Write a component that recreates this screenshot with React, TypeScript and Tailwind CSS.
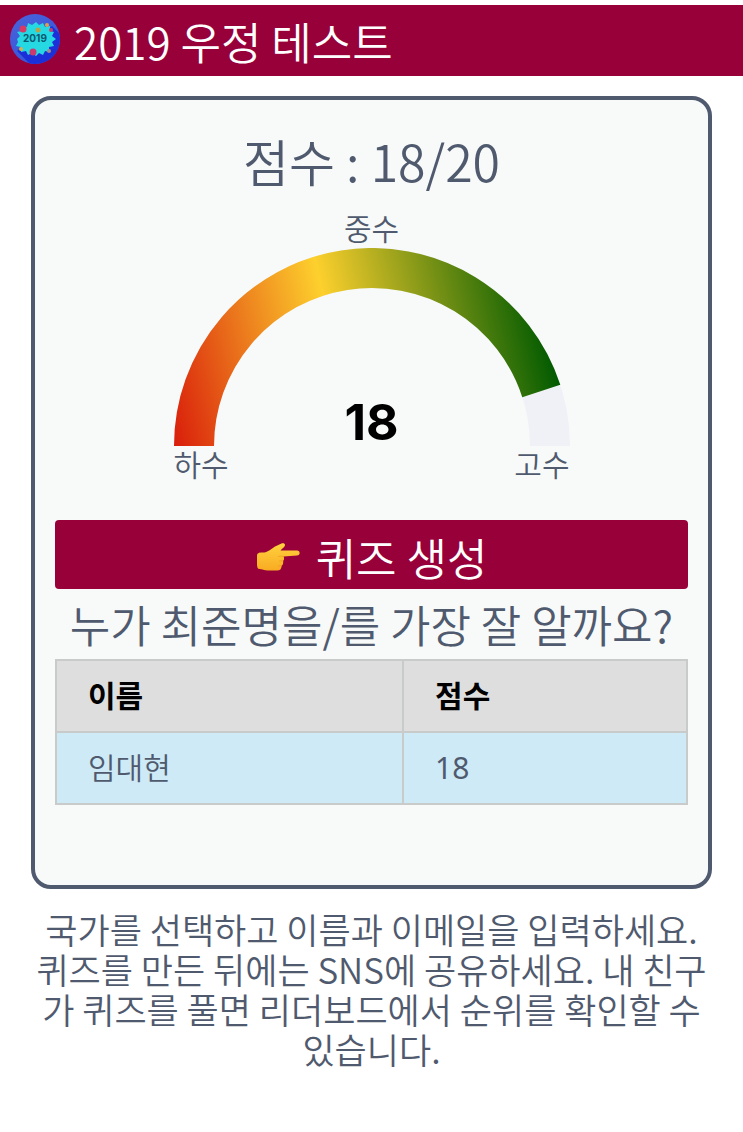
type Entry = {
  name: string;
  score: number;
};

const TOTAL = 20;
const entries: Entry[] = [{ name: "임대현", score: 18 }];

function Logo() {
  return (
    <svg viewBox="0 0 50 50" className="size-[50px] shrink-0" aria-hidden="true">
      <defs>
        <linearGradient id="logo-bg" x1="0" y1="0" x2="0.6" y2="1">
          <stop offset="0" stopColor="#4a63d8" />
          <stop offset="1" stopColor="#3554dc" />
        </linearGradient>
        <clipPath id="logo-clip">
          <circle cx="25" cy="25" r="25" />
        </clipPath>
      </defs>
      <circle cx="25" cy="25" r="25" fill="url(#logo-bg)" />
      <path d="M7 37L20 50H50V20L42 12Z" fill="#1c30da" clipPath="url(#logo-clip)" />
      <path
        d="M7 25l3-3-3-4 5-1-1-5 6 1 1-4 4 2 4-3 3 3 4-2 2 4 5-1v5l4 1-2 4 4 3-4 3 2 4-5 1v5l-4-1-2 4-4-2-3 3-4-3-4 2-2-4-5 1 0-5-5-1 2-4z"
        fill="#25d8e2"
      />
      <circle cx="13" cy="15" r="3.5" fill="#d93a63" />
      <circle cx="28" cy="16" r="2.5" fill="#b5a34a" />
      <circle cx="37" cy="11" r="2" fill="#dca24a" />
      <circle cx="41" cy="16" r="2" fill="#c4416e" />
      <circle cx="11" cy="35" r="2" fill="#d5b04c" />
      <circle cx="23" cy="38" r="3.5" fill="#c93a72" />
      <circle cx="39" cy="37" r="2" fill="#a68c8a" />
      <text x="25" y="28" textAnchor="middle" className="fill-[#0c5870] font-['Inter'] text-[10px] font-bold">
        2019
      </text>
    </svg>
  );
}

function PointingHand() {
  return (
    <svg viewBox="0 0 44 28" className="h-7 w-11 shrink-0" aria-hidden="true">
      <defs>
        <linearGradient id="hand" x1="0" y1="0" x2="0" y2="1">
          <stop offset="0" stopColor="#ffd23f" />
          <stop offset="1" stopColor="#f9ab22" />
        </linearGradient>
      </defs>
      <path
        d="M1 13C1 10 3 9.500 6 9.500C11 10 15 6 19 3.500L25 .7C27 -.2 29 .3 29 2C29 4 26 5.500 24.500 7.500L41 7.500C44.500 7.500 44.500 12.500 41 12.500L27.500 13.500C28.500 15 28.200 17 27 18C27.500 20 27 22 25.500 23C25.500 26 24 27.500 21 27.500L12 27.500C8 27.500 6 26 3.500 26C1.500 26 1 24 1 21Z"
        fill="url(#hand)"
      />
      <path
        d="M27.500 13.500C25 13 23.500 13 22.500 13.500M27 18C25.500 17.500 24 17.800 23.500 18M25.500 23C24.500 22.500 23.500 22.500 22.500 23"
        fill="none"
        stroke="#e89a1c"
        strokeWidth="0.700"
        strokeLinecap="round"
      />
    </svg>
  );
}

function Gauge({ score }: { score: number }) {
  const angle = Math.PI * (1 - score / TOTAL);
  const x = 198 + 178 * Math.cos(angle);
  const y = 198 - 178 * Math.sin(angle);

  return (
    <div className="mx-auto w-[396px] max-w-full text-[30px] leading-[34px]">
      <p className="pb-1 text-center">중수</p>
      <div className="relative">
        <svg viewBox="0 0 396 198" className="block w-full" aria-hidden="true">
          <defs>
            <linearGradient id="gauge" gradientUnits="userSpaceOnUse" x1="0" y1="198" x2="380" y2="109">
              <stop offset="0" stopColor="#d91e0b" />
              <stop offset="0.46" stopColor="#fdd02d" />
              <stop offset="1" stopColor="#005a00" />
            </linearGradient>
          </defs>
          <path d="M20 198A178 178 0 0 1 376 198" fill="none" stroke="#f0f1f6" strokeWidth="40" />
          <path
            d={`M20 198A178 178 0 0 1 ${x} ${y}`}
            fill="none"
            stroke="url(#gauge)"
            strokeWidth="40"
          />
        </svg>
        <p className="absolute inset-x-0 bottom-0 text-center font-['Inter',sans-serif] text-[50px] leading-[48px] font-bold text-black">
          {score}
        </p>
      </div>
      <div className="flex justify-between pb-1">
        <p>하수</p>
        <p>고수</p>
      </div>
    </div>
  );
}

function Leaderboard() {
  return (
    <table className="w-full border-collapse text-left text-[30px] leading-[42px]">
      <thead>
        <tr className="bg-[#dedede] text-black">
          <th className="w-[55%] border-2 border-[#c9cbcb] px-[31px] pt-3 pb-4 font-bold">이름</th>
          <th className="border-2 border-[#c9cbcb] px-[31px] pt-3 pb-4 font-bold">점수</th>
        </tr>
      </thead>
      <tbody>
        {entries.map((entry) => (
          <tr key={entry.name} className="bg-[#cdeaf6]">
            <td className="border-2 border-[#c9cbcb] px-[31px] pt-3 pb-4">{entry.name}</td>
            <td className="border-2 border-[#c9cbcb] px-[31px] font-['Noto_Sans','Noto_Sans_CJK_KR',sans-serif] font-normal">
              {entry.score}
            </td>
          </tr>
        ))}
      </tbody>
    </table>
  );
}

export default function App() {
  return (
    <div className="bg-white pt-[5px] pb-16 font-['Noto_Sans_CJK_KR',sans-serif] font-[350] text-[#505a6e]">
      <header className="flex h-[71px] items-center gap-[14px] bg-[#98003a] px-[10px] pb-1 text-white">
        <Logo />
        <h1 className="pt-1 text-[44px] leading-[60px]">2019 우정 테스트</h1>
      </header>

      <main className="px-[31px] pt-5">
        <section className="rounded-[20px] border-4 border-[#505a6e] bg-[#f8faf9] px-5 pt-6 pb-20">
          <h2 className="text-center text-[50px] leading-[72px]">점수 : {entries[0].score}/{TOTAL}</h2>
          <div className="pt-[14px]">
            <Gauge score={entries[0].score} />
          </div>
          <button
            type="button"
            className="mt-9 flex h-[69px] w-full items-center justify-center gap-4 rounded bg-[#98003a] pt-1 text-[44px] text-white"
          >
            <PointingHand />
            퀴즈 생성
          </button>
          <h3 className="py-1 text-center text-[44px] leading-[62px]">누가 최준명을/를 가장 잘 알까요?</h3>
          <Leaderboard />
        </section>

        <p className="pt-5 text-center text-[35px] leading-10">
          국가를 선택하고 이름과 이메일을 입력하세요. 퀴즈를 만든 뒤에는 SNS에 공유하세요. 내 친구가 퀴즈를 풀면
          리더보드에서 순위를 확인할 수 있습니다.
        </p>
      </main>
    </div>
  );
}
